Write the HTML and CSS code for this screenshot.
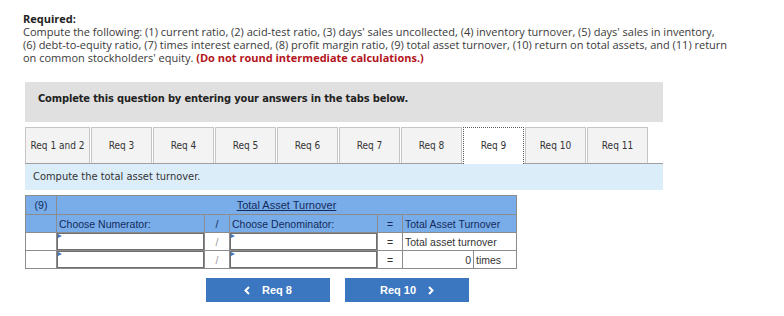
FILE: index.html
```html
<!doctype html>
<html>
  <head>
    <title>Total Asset Turnover</title>
    <link rel="stylesheet" href="styles.css">
  </head>
  <body>
    <div class="page">
      <div class="required">
        <div class="required-title">Required:</div>
        Compute the following: (1) current ratio, (2) acid-test ratio, (3) days' sales uncollected, (4) inventory turnover, (5) days' sales in inventory,<br>
        (6) debt-to-equity ratio, (7) times interest earned, (8) profit margin ratio, (9) total asset turnover, (10) return on total assets, and (11) return<br>
        on common stockholders' equity. <span class="warn">(Do not round intermediate calculations.)</span>
      </div>

      <div class="panel">
        <div class="panel-head">Complete this question by entering your answers in the tabs below.</div>

        <div class="tabs">
          <div class="tab first">Req 1 and 2</div>
          <div class="tab">Req 3</div>
          <div class="tab">Req 4</div>
          <div class="tab">Req 5</div>
          <div class="tab">Req 6</div>
          <div class="tab">Req 7</div>
          <div class="tab">Req 8</div>
          <div class="tab active">Req 9</div>
          <div class="tab">Req 10</div>
          <div class="tab">Req 11</div>
        </div>

        <div class="instruction">Compute the total asset turnover.</div>

        <table class="ratio">
          <tr class="head">
            <td class="num">(9)</td>
            <td colspan="6" class="title"><u>Total Asset Turnover</u></td>
          </tr>
          <tr class="head">
            <td></td>
            <td class="label">Choose Numerator:</td>
            <td class="op">/</td>
            <td class="label">Choose Denominator:</td>
            <td class="op">=</td>
            <td colspan="2" class="label">Total Asset Turnover</td>
          </tr>
          <tr>
            <td></td>
            <td class="pick"><div class="select"></div></td>
            <td class="op faint">/</td>
            <td class="pick"><div class="select"></div></td>
            <td class="op">=</td>
            <td colspan="2" class="text">Total asset turnover</td>
          </tr>
          <tr>
            <td></td>
            <td class="pick"><div class="select"></div></td>
            <td class="op faint">/</td>
            <td class="pick"><div class="select"></div></td>
            <td class="op">=</td>
            <td class="value">0</td>
            <td class="text unit">times</td>
          </tr>
        </table>

        <div class="nav">
          <button class="nav-btn">
            <svg class="chev" width="6" height="9" viewBox="0 0 6 9"><path d="M5 1 L1.5 4.5 L5 8" fill="none" stroke="#ffffff" stroke-width="2"/></svg>
            Req 8
          </button>
          <button class="nav-btn">
            Req 10
            <svg class="chev right" width="6" height="9" viewBox="0 0 6 9"><path d="M1 1 L4.5 4.5 L1 8" fill="none" stroke="#ffffff" stroke-width="2"/></svg>
          </button>
        </div>
      </div>
    </div>
  </body>
</html>
```

FILE: styles.css
```css
body {
  margin: 0;
  background: #ffffff;
  font-family: 'Open Sans', 'Lato', sans-serif;
  color: #333333;
}

.page {
  padding: 12px 23px 0 23px;
}

.required {
  font-size: 11px;
  line-height: 13px;
  color: #3a3a3a;
  white-space: nowrap;
}

.required-title {
  font-weight: 700;
  color: #222222;
}

.warn {
  color: #b3141c;
  font-weight: 700;
}

.panel {
  margin: 18px 0 0 2px;
  width: 638px;
}

.panel-head {
  background: #e0e0e0;
  padding: 10px 13px 17px 13px;
  font-family: 'DejaVu Sans Condensed', 'DejaVu Sans', sans-serif;
  font-size: 11px;
  line-height: 13px;
  font-weight: 700;
  letter-spacing: -0.14px;
  color: #222222;
}

.tabs {
  display: flex;
  align-items: flex-end;
  gap: 1px;
  margin-top: 5px;
  border-bottom: 1px solid #a0a0a0;
}

.tab {
  width: 59px;
  height: 35px;
  display: flex;
  align-items: center;
  justify-content: center;
  background: #f3f3f3;
  border: 1px solid #c6c6c6;
  border-bottom: none;
  font-family: 'DejaVu Sans Condensed', 'DejaVu Sans', sans-serif;
  font-size: 10px;
  color: #333333;
}

.tab.first {
  width: 63px;
}

.tab.active {
  background: #ffffff;
  border: 1px dotted #555555;
  border-bottom: none;
  margin-bottom: -1px;
  height: 35px;
  padding-bottom: 1px;
}

.instruction {
  background: #dcedfa;
  height: 26px;
  line-height: 26px;
  padding-left: 8px;
  font-family: 'DejaVu Sans Condensed', 'DejaVu Sans', sans-serif;
  font-size: 11px;
  color: #333333;
}

.ratio {
  margin-top: 5px;
  border-collapse: collapse;
  font-family: 'Liberation Sans', Arial, sans-serif;
  font-size: 10.5px;
  color: #333333;
}

.ratio td {
  border: 1px solid #8c8c8c;
  padding: 0 2px;
  height: 17px;
}

.ratio tr.head td {
  background: #78ade9;
  color: #142b5c;
}

.ratio tr.head:first-child td {
  height: 18px;
}

.ratio td.num {
  text-align: center;
  padding: 0;
  width: 30px;
}

.ratio td.title {
  text-align: center;
  font-size: 11px;
}

.ratio td.op {
  width: 20px;
  text-align: center;
}

.ratio td.faint {
  color: #9a9a9a;
}

.ratio td.pick {
  padding: 0;
  width: 147px;
}

.select {
  position: relative;
  height: 15px;
  border: 1.5px solid #6e6e6e;
  background: #ffffff;
}

.select::before {
  content: '';
  position: absolute;
  left: 0;
  top: 0;
  border-left: 4px solid #3d78c0;
  border-top: 2.5px solid transparent;
  border-bottom: 2.5px solid transparent;
}

.ratio td.value {
  width: 66px;
  text-align: right;
}

.ratio td.unit {
  width: 38px;
}

.nav {
  display: flex;
  justify-content: center;
  gap: 15px;
  margin-top: 9px;
  padding-right: 13px;
}

.nav-btn {
  width: 124px;
  height: 24px;
  border: none;
  background: #3b77c0;
  color: #ffffff;
  font-family: 'Liberation Sans', Arial, sans-serif;
  font-size: 11px;
  font-weight: 700;
  display: flex;
  align-items: center;
  justify-content: center;
}

.chev {
  margin-right: 12px;
}

.chev.right {
  margin: 0 0 0 12px;
}
```
